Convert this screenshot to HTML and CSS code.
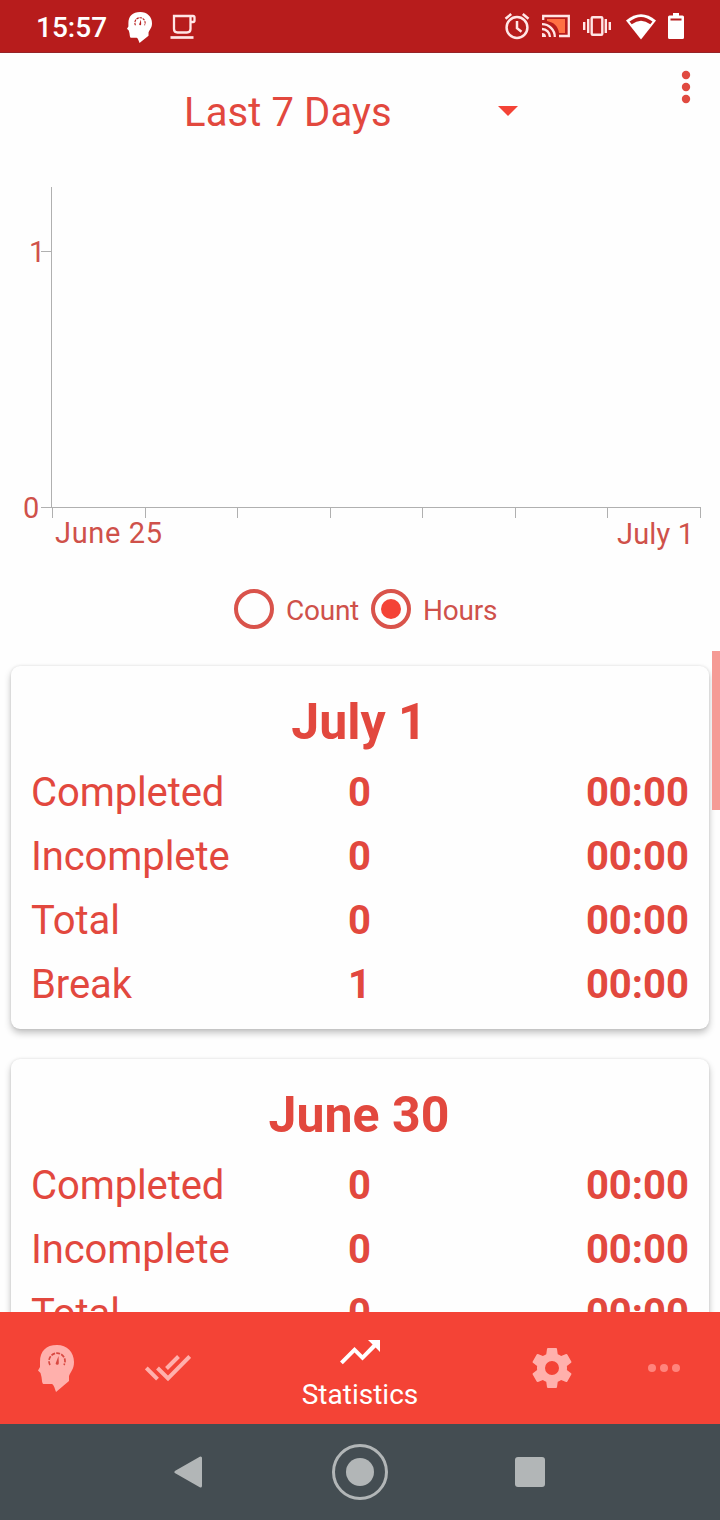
FILE: index.html
```html
<!DOCTYPE html>
<html lang="en">
<head>
<meta charset="utf-8">
<title>Statistics</title>
<link rel="stylesheet" href="styles.css">
</head>
<body>
<svg class="defs" aria-hidden="true">
  <symbol id="head" viewBox="0 0 36 47" preserveAspectRatio="none">
    <path d="M2 17C2 6 8 0 19 0c10 0 17 7 17 17 0 7-3 9-5 14v5L18 47c-1-3-2-7-4-8H5.500c-1.500 0-1.500-4-2-7L2.500 28 0 25.500 2 22z"/>
  </symbol>
  <symbol id="gauge" viewBox="0 0 18 14">
    <path d="M2 13a8 8 0 1 1 14 0" fill="none" stroke="currentColor" stroke-width="1.700" stroke-dasharray="4 1.200"/>
    <path d="M8 10.500 10.500 4l.3 7a1.500 1.500 0 1 1-2.800-.5" fill="currentColor"/>
  </symbol>
</svg>
<div class="screen">
  <header class="status">
    <span class="clock">15:57</span>
    <span class="head head-small"><svg width="25" height="31"><use href="#head"/></svg><svg class="gauge" width="12" height="9"><use href="#gauge"/></svg></span>
    <svg class="cup" width="27" height="26" viewBox="0 0 27 26" fill="none" stroke="#ffe6e6" stroke-width="2.300"><path d="M20.500 2H4v13q0 3.500 3.500 3.500h9.500q3.500 0 3.500-3.500zM20.500 2H23q1.500 0 1.500 1.500V6.500q0 1.500-1.500 1.500h-2.500"/><path d="M.5 23.500h23" stroke-width="2.700"/></svg>
    <span class="system">
      <svg width="26" height="28" viewBox="0 0 26 28" fill="none" stroke="#ffe6e6" stroke-width="2.500"><circle cx="13" cy="15.500" r="10.400"/><path d="M13 9v7.200l4.500 3.500M1.500 6.800 7.200 2M24.500 6.800 18.800 2"/></svg>
      <svg width="28" height="24" viewBox="0 0 28 24" fill="none" stroke="#ffe6e6" stroke-width="2.300"><path d="M5 5h18v14h-6C16 12 12 8.500 5 7z" fill="#ff7043" stroke="none"/><path d="M1.200 6V2h25.600v20H17M0 10.200c7 0 12.800 5.600 12.800 12.800M0 15a8 8 0 0 1 8 8"/><path d="M0 19a4 4 0 0 1 4 4H0z" fill="#ffe6e6" stroke="none"/></svg>
      <svg width="28" height="22" viewBox="0 0 28 22" fill="none" stroke="#ffe6e6" stroke-width="2.400"><rect x="8.700" y="2.200" width="10.600" height="17.600" rx="1"/><path d="M1.200 7v8M5.200 4v14M22.800 4v14M26.800 7v8"/></svg>
      <svg width="30" height="26" viewBox="0 0 30 26"><path d="M0 6.500Q15-6 30 6.500L15 25.500z" fill="#fff"/><path d="M3.500 7.600Q15-1.800 26.500 7.600L24.300 10.300Q15 3 5.700 10.300z" fill="#b71c1c"/></svg>
      <svg width="16" height="26" viewBox="0 0 16 26"><path d="M5 0h6v2.500h3.500Q16 2.500 16 4v20.500q0 1.500-1.500 1.500h-13Q0 26 0 24.500V4q0-1.500 1.500-1.500H5z" fill="#fff"/><path d="M2.500 5.500h11v2h-11z" fill="#b71c1c"/></svg>
    </span>
  </header>

  <section class="toolbar">
    <span class="period">Last 7 Days</span>
    <svg class="caret" width="20" height="10" viewBox="0 0 20 10"><path d="M0 0h20L10 10z" fill="#f44336"/></svg>
    <svg class="more" width="10" height="34" viewBox="0 0 10 34" fill="#e04a40"><circle cx="5" cy="5" r="4.200"/><circle cx="5" cy="17" r="4.200"/><circle cx="5" cy="29" r="4.200"/></svg>
  </section>

  <svg class="chart" width="720" height="377" viewBox="0 187 720 377">
    <path d="M51.500 187v320M41 251.500h10M41 507.500h660M52.500 508v10M145.500 508v10M237.500 508v10M330.500 508v10M422.500 508v10M515.500 508v10M607.500 508v10M700.500 508v10" stroke="#b0b0b0" fill="none"/>
    <text x="29" y="262">1</text>
    <text x="23" y="518">0</text>
    <text x="55" y="543" textLength="107">June 25</text>
    <text x="617" y="544" textLength="77">July 1</text>
  </svg>

  <div class="modes">
    <span class="radio"></span><span class="mode">Count</span>
    <span class="radio on"></span><span class="mode">Hours</span>
  </div>

  <main class="list">
    <article class="card">
      <h2>July 1</h2>
      <div class="row"><span>Completed</span><b>0</b><b>00:00</b></div>
      <div class="row"><span>Incomplete</span><b>0</b><b>00:00</b></div>
      <div class="row"><span>Total</span><b>0</b><b>00:00</b></div>
      <div class="row"><span>Break</span><b>1</b><b>00:00</b></div>
    </article>
    <article class="card">
      <h2>June 30</h2>
      <div class="row"><span>Completed</span><b>0</b><b>00:00</b></div>
      <div class="row"><span>Incomplete</span><b>0</b><b>00:00</b></div>
      <div class="row"><span>Total</span><b>0</b><b>00:00</b></div>
    </article>
    <div class="scrollbar"></div>
  </main>

  <nav class="tabs">
    <span class="tab"><span class="head head-large"><svg width="36" height="47"><use href="#head"/></svg><svg class="gauge" width="18" height="14"><use href="#gauge"/></svg></span></span>
    <span class="tab"><svg width="46" height="28" viewBox="0 0 46 28" fill="none" stroke="#ffb0ac" stroke-width="4"><path d="M1.300 14 12.500 25.200M12.500 14 23 24.500 44.700 2.500M21.500 14.500 33.500 2.500"/></svg></span>
    <span class="tab active">
      <svg width="40" height="25" viewBox="0 0 40 25"><path d="M28 0h12v12l-4.400-4.400L22.500 20.500l-8-8L2.800 24.300 0 21.500 14.500 7l8 8L32.600 4.600z" fill="#fff"/></svg>
      <span>Statistics</span>
    </span>
    <span class="tab"><svg width="48" height="48" viewBox="0 0 24 24" fill="#ffb0ac"><path d="M19.430 12.980c.04-.32.07-.64.07-.98s-.03-.66-.07-.98l2.110-1.650c.19-.15.24-.42.12-.64l-2-3.460c-.12-.22-.39-.3-.61-.22l-2.490 1c-.52-.4-1.080-.73-1.690-.98l-.38-2.650A.488.488 0 0 0 14 2h-4c-.25 0-.46.18-.49.42l-.38 2.650c-.61.25-1.170.59-1.690.98l-2.490-1c-.23-.09-.49 0-.61.22l-2 3.460c-.13.22-.07.49.12.64l2.110 1.650c-.04.32-.07.65-.07.98s.03.66.07.98l-2.110 1.650c-.19.15-.24.42-.12.64l2 3.460c.12.22.39.3.61.22l2.490-1c.52.4 1.080.73 1.690.98l.38 2.650c.03.24.24.42.49.42h4c.25 0 .46-.18.49-.42l.38-2.650c.61-.25 1.170-.59 1.690-.98l2.490 1c.23.09.49 0 .61-.22l2-3.460c.12-.22.07-.49-.12-.64zM12 15.500a3.500 3.500 0 1 1 0-7 3.500 3.500 0 0 1 0 7z"/></svg></span>
    <span class="tab"><svg width="32" height="8" viewBox="0 0 32 8" fill="#ff847c"><circle cx="4" cy="4" r="4"/><circle cx="16" cy="4" r="4"/><circle cx="28" cy="4" r="4"/></svg></span>
  </nav>

  <footer class="navbar">
    <svg width="28" height="32" viewBox="0 0 28 32"><path d="M2 16 26.500 2v28z" fill="#b2b6b7" stroke="#b2b6b7" stroke-width="3" stroke-linejoin="round"/></svg>
    <svg class="home" width="56" height="56" viewBox="0 0 56 56"><circle cx="28" cy="28" r="26.500" fill="none" stroke="#b2b6b7" stroke-width="3"/><circle cx="28" cy="28" r="14" fill="#b2b6b7"/></svg>
    <svg width="30" height="30" viewBox="0 0 30 30"><rect width="30" height="30" rx="3" fill="#b2b6b7"/></svg>
  </footer>
</div>
</body>
</html>
```
FILE: styles.css
```css
* { box-sizing: border-box; }
body { margin: 0; background: #fefefe; font-family: Roboto, "Liberation Sans", sans-serif; color: #e2483e; }
svg { display: block; flex: none; }
.defs { position: absolute; width: 0; height: 0; }
.screen { width: 720px; height: 1520px; display: flex; flex-direction: column; overflow: hidden; }

.status { height: 53px; flex: none; background: #b71c1c; border-bottom: 1px solid #962328; display: flex; align-items: center; padding: 1px 36px 0; color: #fff; }
.clock { font-size: 28px; font-weight: 500; width: 91px; padding-top: 2px; white-space: nowrap; }
.head { position: relative; display: block; }
.gauge { position: absolute; }
.head-small { fill: #fff; color: #b71c1c; margin-top: 1px; }
.head-small .gauge { left: 7px; top: 5px; }
.cup { margin-left: 18px; }
.system { margin-left: auto; display: flex; align-items: center; gap: 12px; }
.system svg:nth-child(2), .system svg:nth-child(3) { margin-right: 1px; }
.system svg:nth-child(4) { margin-left: 2px; }
.system svg:nth-child(1), .system svg:nth-child(2), .system svg:nth-child(3), .system svg:nth-child(5) { margin-top: -2px; }

.toolbar { height: 134px; flex: none; display: flex; align-items: flex-start; padding: 0 29px 0 184px; }
.period { width: 314px; padding-top: 36px; font-size: 40px; line-height: 48px; letter-spacing: 0.1px; }
.caret { margin-top: 53px; }
.more { margin: 17px 0 0 auto; }

.chart { height: 377px; font-size: 29px; fill: #cf514a; }

.modes { height: 87px; flex: none; display: flex; align-items: center; padding: 3px 0 0 234px; }
.radio { width: 40px; height: 40px; flex: none; border: 4px solid #d9534b; border-radius: 50%; display: grid; place-items: center; margin-right: 12px; }
.radio.on { margin-left: 12px; }
.radio.on::after { content: ""; width: 20px; height: 20px; border-radius: 50%; background: #f44336; }
.mode { font-size: 28px; letter-spacing: -0.25px; color: #cf514a; padding-top: 3px; }

.list { position: relative; height: 661px; flex: none; overflow: hidden; padding: 15px 11px; }
.card { height: 363px; margin-bottom: 30px; border-radius: 9px; padding: 24px 20px 0; background: #fefefe; box-shadow: 0 4px 7px rgba(0, 0, 0, 0.24), 0 0 3px rgba(0, 0, 0, 0.1); }
h2 { margin: 0 0 6px; padding-right: 2px; text-align: center; font-size: 50px; line-height: 64px; font-weight: 700; }
.row { height: 64px; display: grid; grid-template-columns: 1fr 24px 1fr; align-items: center; font-size: 40px; }
.row span { letter-spacing: -0.1px; }
.row b { text-align: center; margin-left: -1px; }
.row b:last-child { text-align: right; }
.scrollbar { position: absolute; right: 0; top: 0; width: 8px; height: 159px; background: #f59b95; }

.tabs { height: 112px; flex: none; display: grid; grid-template-columns: 112px 112px 272px 112px 112px; background: #f44336; }
.tab { display: flex; flex-direction: column; align-items: center; justify-content: center; }
.head-large { fill: #ffb0ac; color: #d84841; }
.head-large .gauge { left: 10px; top: 7px; }
.active { justify-content: flex-start; padding-top: 28px; color: #fff; font-size: 28px; line-height: 34px; gap: 13px; }

.navbar { height: 96px; flex: none; background: #444d52; display: flex; align-items: center; justify-content: space-between; padding: 0 175px 0 174px; }
.home { margin-left: 2px; }
```
